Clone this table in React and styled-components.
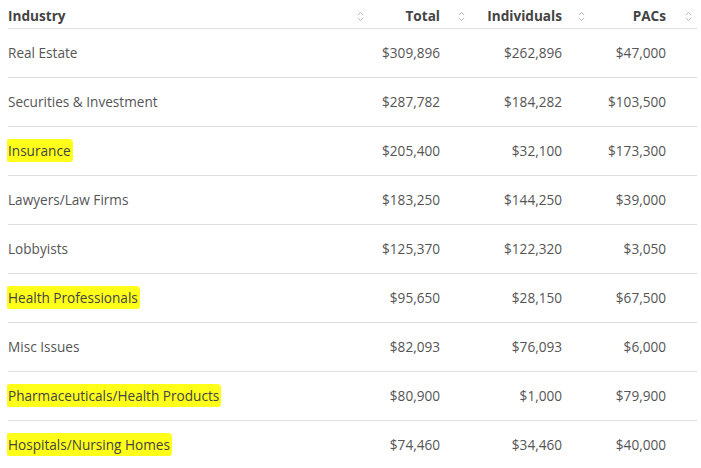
import React from 'react';
import styled, {createGlobalStyle} from 'styled-components';

const GlobalStyle = createGlobalStyle`
body {
  margin: 0;
  background: #fff;
  font-family: "Open Sans", "Liberation Sans", sans-serif;
}
`;

const Wrap = styled.div`
padding: 0 4px 0 8px;
`;

const Table = styled.table`
width: 689px;
border-collapse: collapse;
table-layout: fixed;
font-size: 13.6px;
color: #555;
`;

const Th = styled.th`
box-sizing: border-box;
width: ${p => p.$width}px;
height: 28px;
padding: 4px ${p => p.$pad}px 0 0;
text-align: ${p => p.$align};
font-weight: 700;
color: #444;
border-bottom: 1px solid #ddd;
position: relative;
`;

const SortIcon = styled.svg`
position: absolute;
right: ${p => p.$right}px;
top: 11px;
`;

const Tr = styled.tr`
border-bottom: 1px solid #ddd;
&:last-child { border-bottom: none; }
`;

const Td = styled.td`
height: 48px;
padding: 0 ${p => p.$pad}px 0 0;
text-align: ${p => p.$align};
white-space: nowrap;
`;

const Mark = styled.span`
background: #ffff1a;
padding: 2px 2px 2px 1px;
margin-left: -1px;
border-radius: 2px 4px 3px 2px;
color: #444;
`;

const rows = [
  ['Real Estate', '$309,896', '$262,896', '$47,000'],
  ['Securities & Investment', '$287,782', '$184,282', '$103,500'],
  ['Insurance', '$205,400', '$32,100', '$173,300', true],
  ['Lawyers/Law Firms', '$183,250', '$144,250', '$39,000'],
  ['Lobbyists', '$125,370', '$122,320', '$3,050'],
  ['Health Professionals', '$95,650', '$28,150', '$67,500', true],
  ['Misc Issues', '$82,093', '$76,093', '$6,000'],
  ['Pharmaceuticals/Health Products', '$80,900', '$1,000', '$79,900', true],
  ['Hospitals/Nursing Homes', '$74,460', '$34,460', '$40,000', true],
];

const columns = [
  {label: 'Industry', width: 361, align: 'left', pad: 0, icon: 5},
  {label: 'Total', width: 101, align: 'right', pad: 30, icon: 5},
  {label: 'Individuals', width: 122, align: 'right', pad: 30, icon: 7},
  {label: 'PACs', width: 105, align: 'right', pad: 31, icon: 5},
];

function Sort({right}) {
  return (
    <SortIcon $right={right} width="7" height="11" viewBox="0 0 7 11">
      <path d="M1 4.2 L3.5 1.2 L6 4.2 M1 6.8 L3.5 9.8 L6 6.8" fill="none" stroke="#bbb" strokeWidth="1" />
    </SortIcon>
  );
}

export default function App() {
  return (
    <Wrap>
      <GlobalStyle />
      <Table>
        <thead>
          <tr>
            {columns.map(c => (
              <Th key={c.label} $width={c.width} $align={c.align} $pad={c.pad}>
                {c.label}
                <Sort right={c.icon} />
              </Th>
            ))}
          </tr>
        </thead>
        <tbody>
          {rows.map(r => (
            <Tr key={r[0]}>
              <Td $align="left" $pad={0}>{r[4] ? <Mark>{r[0]}</Mark> : r[0]}</Td>
              <Td $align="right" $pad={30}>{r[1]}</Td>
              <Td $align="right" $pad={30}>{r[2]}</Td>
              <Td $align="right" $pad={31}>{r[3]}</Td>
            </Tr>
          ))}
        </tbody>
      </Table>
    </Wrap>
  );
}
